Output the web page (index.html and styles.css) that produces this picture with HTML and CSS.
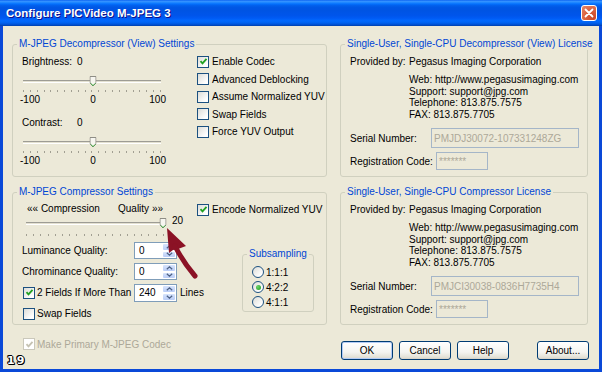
FILE: index.html
```html
<!DOCTYPE html>
<html>
<head>
  <title>Configure PICVideo M-JPEG 3</title>
  <link rel="stylesheet" href="styles.css">
</head>
<body>
  <div class="window">
    <div class="title-bar">
      <span class="title">Configure PICVideo M-JPEG 3</span>
      <span class="close-btn">
        <svg width="10" height="10" viewBox="0 0 10 10"><path d="M1.5 1.5l7 7M8.5 1.5l-7 7" stroke="#fff" stroke-width="1.8" stroke-linecap="round"/></svg>
      </span>
    </div>

    <div class="dialog">
      <div class="groups">

        <!-- decompressor settings -->
        <fieldset class="group">
          <legend>M-JPEG Decompressor (View) Settings</legend>
          <div class="group-body">
            <div class="left-col">
              <div class="value-row first"><span class="value-name">Brightness:</span><span>0</span></div>
              <div class="slider">
                <div class="track"></div>
                <div class="ticks"></div>
                <span class="thumb" style="left: 51%">
                  <svg width="7" height="11" viewBox="0 0 7 11"><path d="M.5.5h6v6.5l-3 3-3-3z" fill="#F7F6F0" stroke="#8E8D85"/><path d="M1.2 7.3l2.3 2.3 2.3-2.3" fill="none" stroke="#3DAA3D"/></svg>
                </span>
              </div>
              <div class="scale"><span>-100</span><span>0</span><span>100</span></div>

              <div class="value-row next"><span class="value-name">Contrast:</span><span>0</span></div>
              <div class="slider">
                <div class="track"></div>
                <div class="ticks"></div>
                <span class="thumb" style="left: 51%">
                  <svg width="7" height="11" viewBox="0 0 7 11"><path d="M.5.5h6v6.5l-3 3-3-3z" fill="#F7F6F0" stroke="#8E8D85"/><path d="M1.2 7.3l2.3 2.3 2.3-2.3" fill="none" stroke="#3DAA3D"/></svg>
                </span>
              </div>
              <div class="scale"><span>-100</span><span>0</span><span>100</span></div>
            </div>

            <div class="check-col">
              <div class="check-row"><span class="checkbox"><svg width="9" height="9" viewBox="0 0 9 9"><path d="M1.5 4.2l2 2.2 4-4.6" fill="none" stroke="#21A121" stroke-width="1.8"/></svg></span>Enable Codec</div>
              <div class="check-row"><span class="checkbox"></span>Advanced Deblocking</div>
              <div class="check-row"><span class="checkbox"></span>Assume Normalized YUV</div>
              <div class="check-row"><span class="checkbox"></span>Swap Fields</div>
              <div class="check-row"><span class="checkbox"></span>Force YUV Output</div>
            </div>
          </div>
        </fieldset>

        <!-- decompressor license -->
        <fieldset class="group">
          <legend>Single-User, Single-CPU Decompressor (View) License</legend>
          <div class="lic-row"><span class="lic-label">Provided by:</span><span>Pegasus Imaging Corporation</span></div>
          <div class="contact">
            Web: http://www.pegasusimaging.com<br>
            Support: support@jpg.com<br>
            Telephone: 813.875.7575<br>
            FAX: 813.875.7705
          </div>
          <div class="field-row serial-row"><span class="field-label">Serial Number:</span><span class="box serial">PMJDJ30072-107331248ZG</span></div>
          <div class="field-row reg-row"><span class="field-label reg">Registration Code:</span><span class="box code">*******</span></div>
        </fieldset>

        <!-- compressor settings -->
        <fieldset class="group">
          <legend>M-JPEG Compressor Settings</legend>
          <div class="group-body">
            <div class="left-col">
              <div class="quality-labels"><span class="compression">&laquo;&laquo; Compression</span><span>Quality &raquo;&raquo;</span></div>
              <div class="quality-row">
                <div class="slider compress">
                  <div class="track"></div>
                  <div class="ticks"></div>
                  <span class="thumb" style="left: 99%">
                    <svg width="7" height="11" viewBox="0 0 7 11"><path d="M.5.5h6v6.5l-3 3-3-3z" fill="#F7F6F0" stroke="#8E8D85"/><path d="M1.2 7.3l2.3 2.3 2.3-2.3" fill="none" stroke="#3DAA3D"/></svg>
                  </span>
                </div>
                <span class="quality-value">20</span>
              </div>

              <div class="form-rows">
                <div class="form-row">
                  <span class="field-name">Luminance Quality:</span>
                  <span class="spin"><span class="spin-value">0</span><span class="spin-btns"><span class="spin-btn"><svg width="7" height="4" viewBox="0 0 7 4"><path d="M.8 3.3L3.5.8l2.7 2.5" fill="none" stroke="#4D6185" stroke-width="1.2"/></svg></span><span class="spin-btn"><svg width="7" height="4" viewBox="0 0 7 4"><path d="M.8.7l2.7 2.5L6.2.7" fill="none" stroke="#4D6185" stroke-width="1.2"/></svg></span></span></span>
                </div>
                <div class="form-row">
                  <span class="field-name">Chrominance Quality:</span>
                  <span class="spin"><span class="spin-value">0</span><span class="spin-btns"><span class="spin-btn"><svg width="7" height="4" viewBox="0 0 7 4"><path d="M.8 3.3L3.5.8l2.7 2.5" fill="none" stroke="#4D6185" stroke-width="1.2"/></svg></span><span class="spin-btn"><svg width="7" height="4" viewBox="0 0 7 4"><path d="M.8.7l2.7 2.5L6.2.7" fill="none" stroke="#4D6185" stroke-width="1.2"/></svg></span></span></span>
                </div>
                <div class="form-row">
                  <span class="field-name check-name"><span class="checkbox"><svg width="9" height="9" viewBox="0 0 9 9"><path d="M1.5 4.2l2 2.2 4-4.6" fill="none" stroke="#21A121" stroke-width="1.8"/></svg></span>2 Fields If More Than</span>
                  <span class="spin tall"><span class="spin-value">240</span><span class="spin-btns"><span class="spin-btn"><svg width="7" height="4" viewBox="0 0 7 4"><path d="M.8 3.3L3.5.8l2.7 2.5" fill="none" stroke="#4D6185" stroke-width="1.2"/></svg></span><span class="spin-btn"><svg width="7" height="4" viewBox="0 0 7 4"><path d="M.8.7l2.7 2.5L6.2.7" fill="none" stroke="#4D6185" stroke-width="1.2"/></svg></span></span></span>
                  <span class="lines">Lines</span>
                </div>
                <div class="form-row">
                  <span class="field-name check-name"><span class="checkbox"></span>Swap Fields</span>
                </div>
              </div>
            </div>

            <div class="check-col">
              <div class="check-row"><span class="checkbox"><svg width="9" height="9" viewBox="0 0 9 9"><path d="M1.5 4.2l2 2.2 4-4.6" fill="none" stroke="#21A121" stroke-width="1.8"/></svg></span>Encode Normalized YUV</div>
              <fieldset class="subsampling">
                <legend>Subsampling</legend>
                <div class="radio-list">
                  <div class="radio-row"><span class="radio"></span>1:1:1</div>
                  <div class="radio-row"><span class="radio on"></span>4:2:2</div>
                  <div class="radio-row"><span class="radio"></span>4:1:1</div>
                </div>
              </fieldset>
            </div>
          </div>
        </fieldset>

        <!-- compressor license -->
        <fieldset class="group">
          <legend>Single-User, Single-CPU Compressor License</legend>
          <div class="lic-row"><span class="lic-label">Provided by:</span><span>Pegasus Imaging Corporation</span></div>
          <div class="contact">
            Web: http://www.pegasusimaging.com<br>
            Support: support@jpg.com<br>
            Telephone: 813.875.7575<br>
            FAX: 813.875.7705
          </div>
          <div class="field-row serial-row"><span class="field-label">Serial Number:</span><span class="box serial">PMJCI30038-0836H7735H4</span></div>
          <div class="field-row reg-row"><span class="field-label reg">Registration Code:</span><span class="box code">*******</span></div>
        </fieldset>
      </div>

      <div class="footer">
        <div class="check-row disabled"><span class="checkbox"><svg width="9" height="9" viewBox="0 0 9 9"><path d="M1.5 4.2l2 2.2 4-4.6" fill="none" stroke="#C5C2B2" stroke-width="1.8"/></svg></span>Make Primary M-JPEG Codec</div>
        <div class="buttons">
          <button class="default">OK</button>
          <button>Cancel</button>
          <button>Help</button>
          <button class="about">About...</button>
        </div>
      </div>
    </div>

    <span class="stamp">19</span>

    <svg class="arrow" width="50" height="62" viewBox="0 0 50 62">
      <path d="M9 6 L11 31 L15 28 L20 27 L28 24 Z" fill="#8B1225"/>
      <path d="M17 24 Q25 40 37 54" fill="none" stroke="#8B1225" stroke-width="5" stroke-linecap="round"/>
    </svg>
  </div>
</body>
</html>
```

FILE: styles.css
```css
* {
  box-sizing: border-box;
}

body {
  margin: 0;
  font-family: "Liberation Sans", Arial, sans-serif;
  font-size: 10px;
  color: #000;
  background-color: #fff;
  white-space: nowrap;
}

.window {
  position: relative;
  width: 602px;
  height: 372px;
}

.title-bar {
  height: 26px;
  display: flex;
  align-items: center;
  justify-content: space-between;
  padding: 0 5px 0 6px;
  background: linear-gradient(to bottom, #0058EE 0%, #3A93FF 4%, #288EFF 8%, #127DFF 12%, #036FFC 16%, #0262EE 20%, #0057E5 28%, #0054E3 40%, #0055EB 60%, #005BF5 70%, #026AFE 80%, #0062EF 88%, #0052D6 94%, #0040AB 100%);
}

.title {
  color: #fff;
  font-weight: bold;
  font-size: 11.5px;
  text-shadow: 1px 1px #0F1089;
}

.close-btn {
  width: 16px;
  height: 16px;
  border: 1px solid #fff;
  border-radius: 3px;
  background: radial-gradient(circle at 80% 85%, #CC4626 0%, #DC6542 55%, #E5886C 100%);
  display: flex;
  align-items: center;
  justify-content: center;
}

.dialog {
  height: 346px;
  background-color: #ECE9D8;
  border: 3px solid #0A49D8;
  border-top: none;
  padding: 12px 11px 0 9px;
}

.groups {
  display: grid;
  grid-template-columns: 315px 248px;
  grid-template-rows: 139px 139px;
  column-gap: 13px;
  row-gap: 9px;
}

.group {
  margin: 0;
  padding: 0 9px;
  min-width: 0;
  border: 1px solid #D0D0BF;
  border-radius: 3px;
}

.group legend,
.subsampling legend {
  padding: 0 2px;
  margin-left: -5px;
  line-height: 12px;
  color: #0046D5;
}

.group-body {
  display: flex;
}

.left-col {
  width: 175px;
  flex: none;
}

/* sliders */
.value-row {
  display: flex;
  height: 12px;
  line-height: 12px;
}

.value-row.first {
  margin-top: 6px;
}

.value-row.next {
  margin-top: 11px;
}

.value-name {
  width: 55px;
}

.slider {
  display: flow-root;
  position: relative;
  width: 138px;
  height: 26px;
  margin-left: 1px;
  --tick: 6.85px;
}

.track {
  height: 3px;
  margin-top: 12px;
  border-top: 1px solid #9D9C94;
  border-bottom: 1px solid #fff;
  background-color: #E3E0D0;
}

.ticks {
  height: 2px;
  margin-top: 7px;
  background: repeating-linear-gradient(to right, #A19F92 0, #A19F92 1px, transparent 1px, transparent var(--tick));
}

.thumb {
  position: absolute;
  top: 8px;
  transform: translateX(-50%);
  line-height: 0;
}

.scale {
  display: grid;
  grid-template-columns: 1fr auto 1fr;
  width: 146px;
  margin-left: -2px;
  height: 12px;
  line-height: 12px;
}

.scale span:last-child {
  text-align: right;
}

/* check boxes */
.check-col {
  padding-top: 3px;
}

.check-row {
  display: flex;
  align-items: center;
  height: 17.5px;
}

.checkbox {
  width: 12px;
  height: 12px;
  flex: none;
  margin-right: 3px;
  border: 1px solid #1C5180;
  background: linear-gradient(135deg, #DCDCD7 0%, #FFFFFF 80%);
  display: flex;
  align-items: center;
  justify-content: center;
}

/* compressor */
.quality-labels {
  display: flex;
  height: 12px;
  line-height: 12px;
  margin-top: 5px;
  padding-left: 5px;
}

.compression {
  width: 91px;
}

.quality-row {
  display: flex;
  height: 22px;
}

.slider.compress {
  height: 22px;
  margin-left: 4px;
  --tick: 7.2px;
}

.slider.compress .track {
  margin-top: 7px;
}

.slider.compress .ticks {
  margin-top: 9px;
}

.slider.compress .thumb {
  top: 3px;
}

.quality-value {
  margin-left: 8px;
  line-height: 12px;
}

.form-rows {
  margin-top: 3px;
}

.form-row {
  display: flex;
  align-items: center;
  height: 21px;
}

.field-name {
  width: 112px;
  flex: none;
}

.check-name {
  display: flex;
  align-items: center;
  padding-left: 1px;
}

.check-name .checkbox {
  margin-right: 2px;
}

.spin {
  display: flex;
  flex: none;
  width: 43px;
  height: 17px;
  border: 1px solid #7F9DB9;
  background-color: #fff;
}

.spin.tall {
  height: 18px;
}

.spin-value {
  flex: 1;
  padding-left: 4px;
  display: flex;
  align-items: center;
}

.spin-btns {
  width: 14px;
  display: flex;
  flex-direction: column;
}

.spin-btn {
  flex: 1;
  display: flex;
  align-items: center;
  justify-content: center;
  border: 1px solid #fff;
  border-radius: 2px;
  background: linear-gradient(to bottom, #D7E4FC, #B9CCF7);
}

.lines {
  margin-left: 3px;
}

.subsampling {
  margin: 29.5px 0 0 45px;
  padding: 0 0 0 9px;
  width: 72px;
  height: 64px;
  min-width: 0;
  border: 1px solid #D0D0BF;
  border-radius: 3px;
}

.radio-list {
  padding-top: 4.5px;
}

.radio-row {
  display: flex;
  align-items: center;
  height: 15px;
}

.radio {
  width: 12px;
  height: 12px;
  margin-right: 2px;
  border: 1px solid #1C5180;
  border-radius: 50%;
  background: linear-gradient(135deg, #DCDCD7 0%, #FFFFFF 80%);
  display: flex;
  align-items: center;
  justify-content: center;
}

.radio.on::after {
  content: "";
  width: 5px;
  height: 5px;
  border-radius: 50%;
  background: radial-gradient(circle at 35% 35%, #6BD46B, #1E9A1E);
}

/* license */
.lic-row {
  display: flex;
  height: 12px;
  line-height: 12px;
  margin-top: 6px;
}

.lic-label {
  width: 59px;
}

.contact {
  margin-top: 6px;
  padding-left: 59px;
  line-height: 11.5px;
}

.field-row {
  display: flex;
  align-items: center;
}

.serial-row {
  margin-top: 8px;
}

.reg-row {
  margin-top: 4px;
}

.field-label {
  width: 81px;
  flex: none;
}

.field-label.reg {
  width: 86px;
}

.box {
  flex: none;
  border: 1px solid #A5B6C8;
  color: #ACA899;
  padding-left: 2px;
  display: flex;
  align-items: center;
}

.box.serial {
  width: 148px;
  height: 20px;
}

.box.code {
  width: 52px;
  height: 18px;
}

/* footer */
.footer {
  display: flex;
  justify-content: space-between;
  height: 44px;
}

.check-row.disabled {
  height: 12px;
  margin: 13px 0 0 11px;
  color: #ACA899;
}

.check-row.disabled .checkbox {
  border-color: #CAC8BB;
  background: #fff;
  margin-right: 2px;
}

.buttons {
  display: flex;
  gap: 6px;
  margin: 16px -1px 0 0;
}

button {
  width: 52px;
  height: 19px;
  padding: 0;
  font-family: "Liberation Sans", Arial, sans-serif;
  font-size: 10px;
  color: #000;
  border: 1px solid #003C74;
  border-radius: 3px;
  background: linear-gradient(to bottom, #FFFFFF 0%, #F4F4F0 60%, #E3E1D6 90%, #D6D0C5 100%);
}

button.default {
  box-shadow: inset 0 0 0 1px #B4CCF5;
}

button.about {
  margin-left: 22px;
}

.stamp {
  position: absolute;
  left: 7px;
  top: 355px;
  font-family: "DejaVu Sans", sans-serif;
  font-weight: bold;
  font-size: 11px;
  line-height: 12px;
  letter-spacing: 2px;
  color: #fff;
  text-shadow: -1px 0 #000, 1px 0 #000, 0 -1px #000, 0 1px #000, 1px 1px #000, -1px -1px #000;
}

.arrow {
  position: absolute;
  left: 158px;
  top: 222px;
}
```
